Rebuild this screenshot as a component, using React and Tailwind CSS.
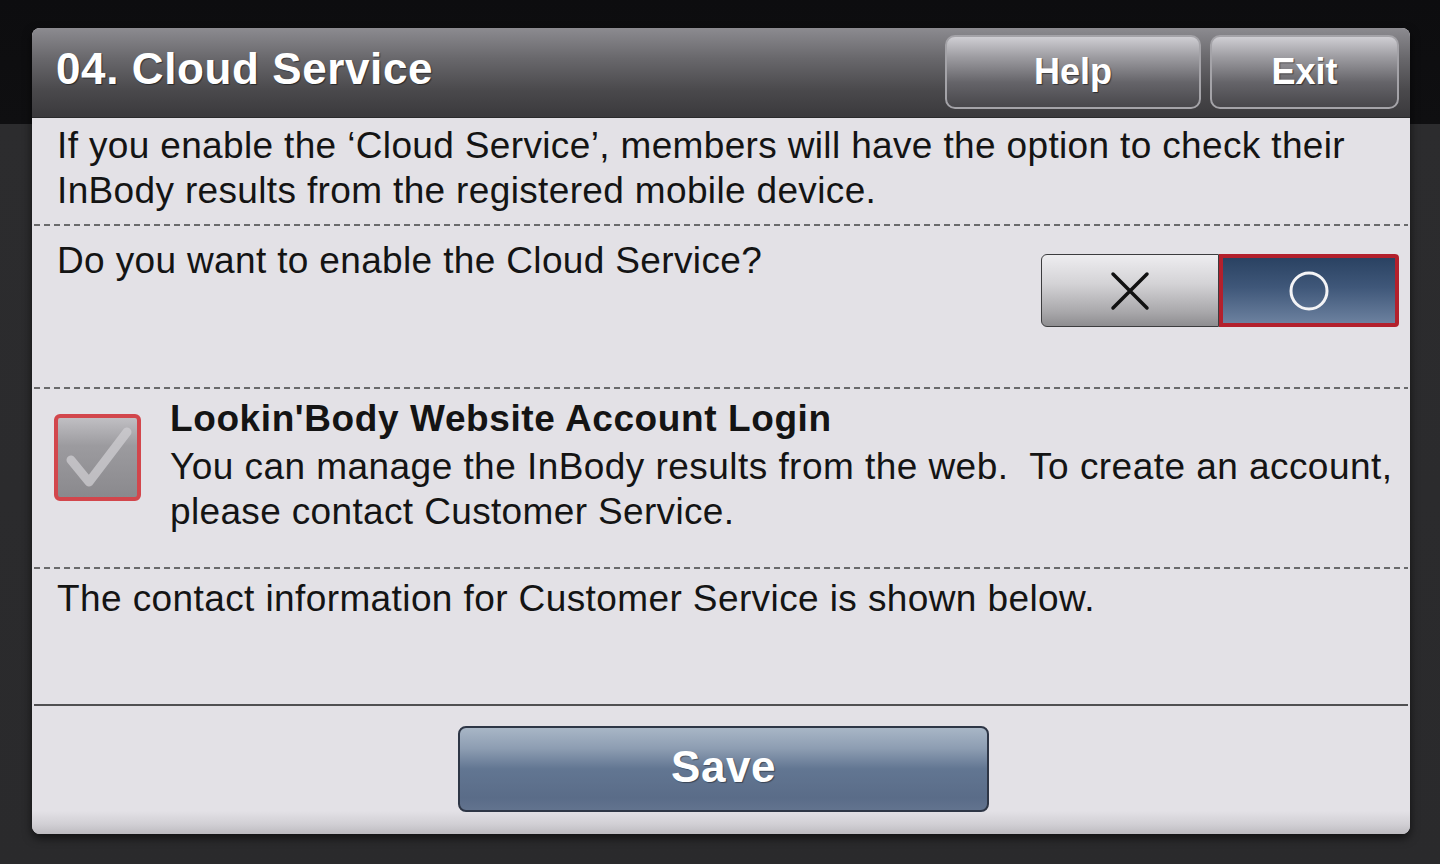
export default function App() {
    return (
        <div className="w-[1440px] h-[864px] overflow-hidden bg-[linear-gradient(to_bottom,#0d0d0f_0,#0f0f11_124px,#2c2c2e_124px,#2a2a2c_100%)] pt-[28px] pl-[32px] font-['Liberation_Sans',Arial,sans-serif]">
            {/* Dialog */}
            <div className="w-[1378px] h-[806px] rounded-[8px] overflow-hidden bg-[#e3e1e6] flex flex-col shadow-[0_4px_10px_rgba(0,0,0,0.6)]">
                {/* Header */}
                <div className="h-[90px] shrink-0 flex items-start justify-between bg-[linear-gradient(to_bottom,#8c8b90_0%,#68676b_35%,#4a494c_70%,#3a393c_100%)] border-b border-[#2a2a2c]">
                    <h1 className="pl-[24px] pt-[15px] text-[44px] leading-[52px] font-bold text-white tracking-[0.6px] [text-shadow:1px_1px_1px_rgba(0,0,0,0.5)]">
                        04. Cloud Service
                    </h1>
                    <div className="flex gap-[9px] pt-[7px] pr-[11px]">
                        <HeaderButton label="Help" width="w-[256px]" />
                        <HeaderButton label="Exit" width="w-[189px]" />
                    </div>
                </div>

                {/* Intro */}
                <div className="h-[106px] shrink-0 pl-[25px] pt-[5px] text-[37px] leading-[45px] tracking-[0.35px] text-[#141414]">
                    <p>If you enable the ‘Cloud Service’, members will have the option to check their</p>
                    <p>InBody results from the registered mobile device.</p>
                </div>
                <Dash />

                {/* Enable toggle */}
                <div className="h-[161px] shrink-0 flex justify-between pl-[25px] pr-[11px]">
                    <p className="pt-[12px] text-[37px] leading-[45px] tracking-[0.35px] text-[#141414]">
                        Do you want to enable the Cloud Service?
                    </p>
                    <div className="mt-[28px] flex h-[73px]">
                        <div className="w-[178px] h-full flex items-center justify-center rounded-l-[6px] border border-[#3c3c3e] bg-[linear-gradient(to_bottom,#eeedf0_0%,#d4d3d6_40%,#a9a8ab_80%,#8e8d90_100%)]">
                            <svg width="40" height="40" viewBox="0 0 40 40">
                                <path d="M3 3 L37 37 M37 3 L3 37" stroke="#111" strokeWidth="3.5" strokeLinecap="round" />
                            </svg>
                        </div>
                        <div className="w-[180px] h-full flex items-center justify-center rounded-r-[4px] border-[4px] border-[#b3202c] bg-[linear-gradient(to_bottom,#2a4262_0%,#3f5779_45%,#6c819f_100%)]">
                            <svg width="42" height="42" viewBox="0 0 42 42">
                                <circle cx="21" cy="21" r="18" fill="none" stroke="#f4f4f6" strokeWidth="3" />
                            </svg>
                        </div>
                    </div>
                </div>
                <Dash />

                {/* Lookin'Body account */}
                <div className="h-[178px] shrink-0 flex pl-[22px] pr-[11px]">
                    <div className="mt-[25px] w-[87px] h-[87px] shrink-0 rounded-[6px] border-[4px] border-[#d2464c] bg-[linear-gradient(to_bottom,#c0bfc3_0%,#9c9b9f_35%,#8a898d_100%)] flex items-center justify-center">
                        <svg width="70" height="64" viewBox="0 0 70 64">
                            <path d="M8 34 L26 56 L64 6" fill="none" stroke="#cfced2" strokeWidth="9" strokeLinecap="round" strokeLinejoin="round" opacity="0.75" />
                        </svg>
                    </div>
                    <div className="pl-[29px] pt-[7px] text-[#141414] tracking-[0.35px]">
                        <p className="text-[37px] leading-[45px] font-bold tracking-[0.6px]">Lookin'Body Website Account Login</p>
                        <p className="mt-[3px] text-[37px] leading-[45px] whitespace-pre tracking-[0.45px]">
                            You can manage the InBody results from the web.  To create an account,
                        </p>
                        <p className="text-[37px] leading-[45px]">please contact Customer Service.</p>
                    </div>
                </div>
                <Dash />

                {/* Contact */}
                <div className="h-[135px] shrink-0 pl-[25px] pt-[7px] text-[37px] leading-[45px] tracking-[0.4px] text-[#141414]">
                    <p>The contact information for Customer Service is shown below.</p>
                </div>
                <div className="h-[2px] mx-[2px] shrink-0 bg-[#505052]" />

                {/* Footer */}
                <div className="flex-1 flex justify-center pt-[20px] pl-[5px] bg-[linear-gradient(to_bottom,#e3e1e6_0%,#e3e1e6_82%,#d2d0d5_92%,#bdbbc0_100%)]">
                    <button className="w-[531px] h-[86px] rounded-[8px] border-2 border-[#2e3646] bg-[linear-gradient(to_bottom,#a8b6c6_0%,#8d9db2_25%,#627692_50%,#5a6c88_85%,#62738e_100%)] text-white text-[44px] font-bold tracking-[0.5px] pb-[4px] [text-shadow:1px_1px_1px_rgba(0,0,0,0.4)]">
                        Save
                    </button>
                </div>
            </div>
        </div>
    );
}

function HeaderButton({ label, width }) {
    return (
        <button
            className={`${width} h-[74px] rounded-[10px] border-2 border-[#a4a3a8] bg-[linear-gradient(to_bottom,#cfced3_0%,#9b9a9f_30%,#656469_65%,#48474b_100%)] text-white text-[36px] font-bold [text-shadow:1px_1px_1px_rgba(0,0,0,0.5)]`}
        >
            {label}
        </button>
    );
}

function Dash() {
    return (
        <div className="h-[2px] shrink-0 mx-[2px] bg-[repeating-linear-gradient(90deg,#6a6a6c_0,#6a6a6c_6px,transparent_6px,transparent_10px)]" />
    );
}
